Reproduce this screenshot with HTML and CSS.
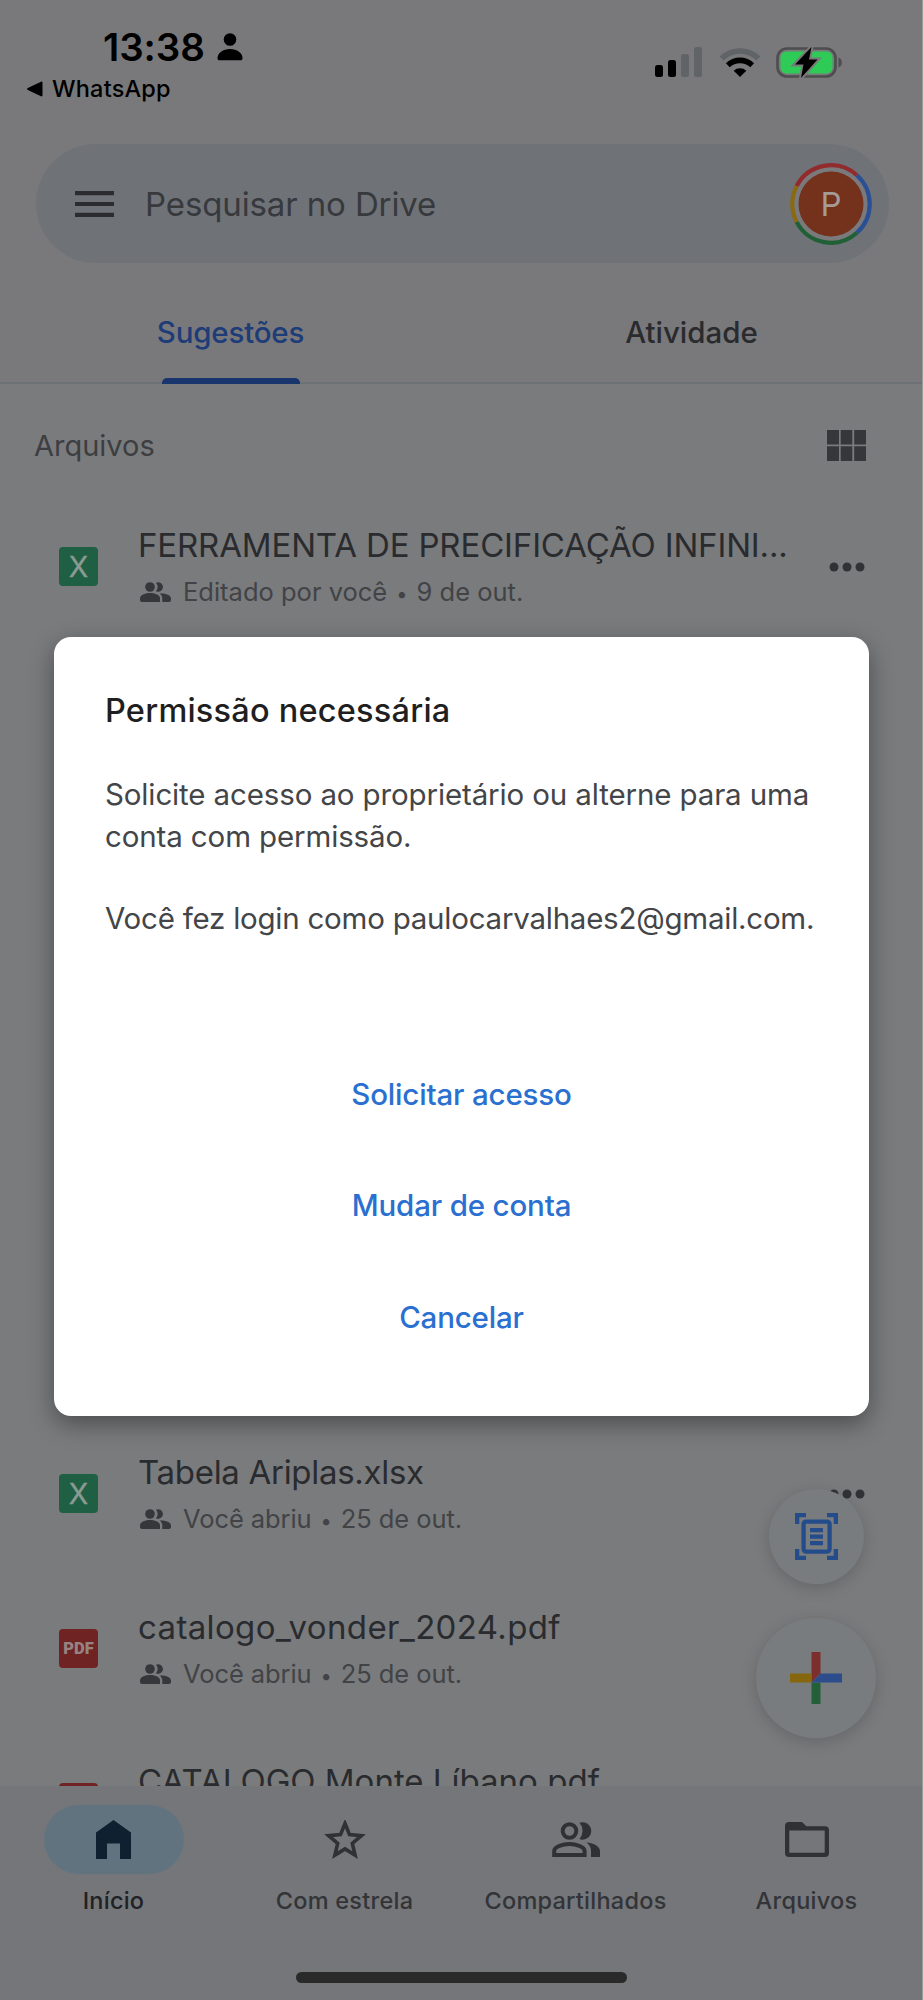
FILE: index.html
```html
<!DOCTYPE html>
<html lang="pt-BR">
<head>
<meta charset="utf-8">
<title>Drive</title>
<link rel="stylesheet" href="styles.css">
</head>
<body>
<svg class="defs" width="0" height="0">
  <symbol id="people" viewBox="0 0 31 20">
    <circle cx="10" cy="5" r="4.800"/>
    <path d="M16 .7a4.800 4.800 0 1 1 0 8.600a7 7 0 0 0 0-8.600z"/>
    <path d="M0 18v-1.600C0 12.600 6 11 10 11s10 1.600 10 5.400V20H2a2 2 0 0 1-2-2z"/>
    <path d="M22.300 20v-3.400c0-2.200-1-3.900-2.600-5.100C24 11 31 12.500 31 16.600V18a2 2 0 0 1-2 2z"/>
  </symbol>
  <symbol id="dots" viewBox="0 0 36 10"><circle cx="5" cy="5" r="4.500"/><circle cx="18" cy="5" r="4.500"/><circle cx="31" cy="5" r="4.500"/></symbol>
</svg>
<div class="screen">
  <header class="status">
    <div class="status-left">
      <div class="clock-row">
        <span class="clock">13:38</span>
        <svg width="26" height="28" viewBox="0 0 26 28"><circle cx="13" cy="6.500" r="6.300"/><path d="M.5 25c0-5 5.500-9 12.500-9s12.500 4 12.500 9c0 1.500-.8 2.300-2 2.300h-21C1.300 27.300.5 26.500.5 25z"/></svg>
      </div>
      <div class="back-row">
        <svg width="16" height="16" viewBox="0 0 16 16"><path d="M.8 7L14 .7c1-.4 1.500 0 1.500 1v12.600c0 1-.5 1.400-1.500 1L.8 9c-1-.5-1-1.500 0-2z"/></svg>
        <span class="back">WhatsApp</span>
      </div>
    </div>
    <div class="status-right">
      <svg width="48" height="30" viewBox="0 0 48 30"><rect x="0" y="18" width="8" height="12" rx="2.500"/><rect x="13" y="13" width="8" height="17" rx="2.500"/><g fill="#606466"><rect x="26" y="7" width="8" height="23" rx="2.500"/><rect x="39" y="0" width="8" height="30" rx="2.500"/></g></svg>
      <svg class="wifi" width="42" height="31" viewBox="0 0 42 31"><g fill="none" stroke-width="5.600"><path d="M2.600 11.500a26.500 26.500 0 0 1 36.800 0" stroke="#606466"/><path d="M8.800 18.300a17.500 17.500 0 0 1 24.400 0" stroke="#000"/></g><path d="M21 30l-6.300-6.200a9.300 9.300 0 0 1 12.600 0z"/></svg>
      <svg width="67" height="33" viewBox="0 0 67 33"><rect x="1.500" y="1.500" width="58" height="28" rx="9.500" fill="none" stroke="#4d4d4f" stroke-width="2.600"/><path d="M62.500 10.500c2 .6 3.300 2.500 3.300 5s-1.300 4.400-3.300 5z" fill="#4d4d4f"/><rect x="4.500" y="4.500" width="52" height="22" rx="6" fill="#2fcb57"/><path d="M35.500 0L19 17.500h8.500L25 31 41.500 12.500H33z" stroke="#79797b" stroke-width="4"/><path d="M35.500 0L19 17.500h8.500L25 31 41.500 12.500H33z"/></svg>
    </div>
  </header>

  <div class="search">
    <svg class="menu" width="39" height="26" viewBox="0 0 39 26"><path d="M0 0h39v4.200H0zM0 10.900h39v4.200H0zM0 21.800h39V26H0z"/></svg>
    <span class="search-text">Pesquisar no Drive</span>
    <div class="avatar">
      <svg class="ring" width="82" height="82" viewBox="0 0 82 82"><circle cx="41" cy="41" r="38.800" fill="#7a7a7c"/><g fill="none" stroke-width="4.200"><path d="M6.600 23.100A38.800 38.800 0 0 1 66.900 12.200" stroke="#912b2e"/><path d="M66.900 12.200A38.800 38.800 0 0 1 66.900 69.800" stroke="#2b4f95"/><path d="M66.900 69.800A38.800 38.800 0 0 1 6.600 58.900" stroke="#215f36"/><path d="M6.600 58.900A38.800 38.800 0 0 1 6.600 23.100" stroke="#8b6912"/></g><circle cx="41" cy="41" r="32.500" fill="#74311b"/></svg>
      <span class="avatar-letter">P</span>
    </div>
  </div>

  <nav class="tabs">
    <div class="tab tab-on"><span>Sugestões</span><i class="tab-bar"></i></div>
    <div class="tab"><span>Atividade</span></div>
  </nav>

  <main class="content">
    <div class="section">
      <span class="section-title">Arquivos</span>
      <svg width="39" height="31" viewBox="0 0 39 31"><path d="M0 0h12v14.500H0zM13.700 0h11.600v14.500H13.700zM27.200 0H39v14.500H27.200zM0 16.300h12V31H0zM13.700 16.300h11.600V31H13.700zM27.200 16.300H39V31H27.200z"/></svg>
    </div>
    <div class="list">
      <div class="row row-1">
        <div class="file xls">X</div>
        <div class="info">
          <div class="name caps">FERRAMENTA DE PRECIFICAÇÃO INFINI...</div>
          <div class="meta"><svg width="31" height="20"><use href="#people"/></svg><span>Editado por você <b class="sep">•</b> 9 de out.</span></div>
        </div>
        <svg class="more" width="36" height="10"><use href="#dots"/></svg>
      </div>
      <div class="row row-7">
        <div class="file xls">X</div>
        <div class="info">
          <div class="name tight">Tabela Ariplas.xlsx</div>
          <div class="meta opened"><svg width="31" height="20"><use href="#people"/></svg><span>Você abriu <b class="sep">•</b> 25 de out.</span></div>
        </div>
        <svg class="more" width="36" height="10"><use href="#dots"/></svg>
      </div>
      <div class="row row-8">
        <div class="file pdf">PDF</div>
        <div class="info">
          <div class="name wide">catalogo_vonder_2024.pdf</div>
          <div class="meta opened"><svg width="31" height="20"><use href="#people"/></svg><span>Você abriu <b class="sep">•</b> 25 de out.</span></div>
        </div>
      </div>
      <div class="row row-9">
        <div class="file pdf"></div>
        <div class="info">
          <div class="name">CATALOGO Monte Líbano.pdf</div>
          <div class="meta"></div>
        </div>
      </div>
    </div>
  </main>

  <footer class="bottom">
    <div class="nav">
      <div class="nav-item nav-on">
        <div class="nav-icon"><svg width="35" height="39" viewBox="0 0 35 39"><path d="M17.500 0L35 12.500V39H24V23.500H11V39H0V12.500z"/></svg></div>
        <span>Início</span>
      </div>
      <div class="nav-item">
        <div class="nav-icon"><svg width="42" height="40" viewBox="0 0 42 40"><path fill="none" stroke="#2f3135" stroke-width="3.600" d="M21 3.500l4.500 11.100 11.900 1-9.100 7.800 2.800 11.700L21 28.900l-10.100 6.200 2.800-11.700-9.100-7.800 11.900-1z"/></svg></div>
        <span>Com estrela</span>
      </div>
      <div class="nav-item">
        <div class="nav-icon"><svg width="48" height="35" viewBox="0 0 48 35"><circle cx="17.500" cy="9" r="6.800" fill="none" stroke="#2f3135" stroke-width="4"/><path d="M27.500 .8a8.700 8.700 0 1 1 0 16.300a12.500 12.500 0 0 0 0-16.300z"/><path d="M2.200 33v-4c0-4.600 9-7 15.200-7s15.200 2.400 15.200 7v4z" fill="none" stroke="#2f3135" stroke-width="4"/><path d="M39 35v-6c0-3.500-1.500-6.300-4.500-8.500C41 21 48 24 48 29v6z"/></svg></div>
        <span>Compartilhados</span>
      </div>
      <div class="nav-item">
        <div class="nav-icon"><svg width="44" height="35" viewBox="0 0 44 35"><path fill-rule="evenodd" d="M4 0h13l4.400 4.300H40a4 4 0 0 1 4 4V31a4 4 0 0 1-4 4H4a4 4 0 0 1-4-4V4a4 4 0 0 1 4-4zM4.300 8.600v22.100h35.400V8.600z"/></svg></div>
        <span>Arquivos</span>
      </div>
    </div>
    <div class="home-bar"></div>
  </footer>

  <div class="fabs">
    <div class="fab fab-small"><svg width="43" height="47" viewBox="0 0 43 47"><path d="M0 0h11v4.300H4.300V11H0zM43 0H32v4.300h6.700V11H43zM0 47h11v-4.300H4.300V36H0zM43 47H32v-4.300h6.700V36H43zM15 15h13v4.200H15zM15 21.500h13v4.200H15zM15 28h13v4.200H15z"/><rect x="8.600" y="8.600" width="26" height="30" rx="2.500" fill="none" stroke="#244c8b" stroke-width="4.300"/></svg></div>
    <div class="fab fab-big"><svg width="52" height="52" viewBox="0 0 52 52"><path fill="#7c2f2c" d="M21.500 0h9v21.500l-9 9z"/><path fill="#86660f" d="M0 21.500h21.500v9H0z"/><path fill="#23603a" d="M21.500 30.500h9V52h-9z"/><path fill="#2d4c8c" d="M30.500 21.500H52v9H21.500z"/></svg></div>
  </div>

  <section class="dialog">
    <h1>Permissão necessária</h1>
    <p>Solicite acesso ao proprietário ou alterne para uma<br>conta com permissão.</p>
    <p class="account">Você fez login como paulocarvalhaes2@gmail.com.</p>
    <div class="actions">
      <button>Solicitar acesso</button>
      <button>Mudar de conta</button>
      <button>Cancelar</button>
    </div>
  </section>
</div>
</body>
</html>
```
FILE: styles.css
```css
* { box-sizing: border-box; }
body { margin: 0; background: #9a9a9c; font-family: Inter, "Liberation Sans", sans-serif; }
svg { display: block; flex: none; }
.defs { position: absolute; }
span { white-space: nowrap; }

.screen { position: relative; display: flex; flex-direction: column; width: 922px; height: 2000px; overflow: hidden; background: #79797b; }

.status { display: flex; justify-content: space-between; height: 144px; padding: 24px 79px 0 27px; color: #000; }
.status-left { display: flex; flex-direction: column; gap: 4px; }
.clock-row { display: flex; align-items: center; gap: 12px; padding-left: 76px; height: 46px; }
.clock { font-size: 38.5px; line-height: 46px; font-weight: 600; letter-spacing: -.1px; }
.back-row { display: flex; align-items: center; gap: 9px; height: 30px; }
.back { font-size: 23.5px; line-height: 30px; font-weight: 500; letter-spacing: .2px; }
.status-right { display: flex; align-items: flex-start; padding-top: 23px; }
.wifi { margin: 0 15px 0 16px; }

.search { display: flex; align-items: center; height: 119px; margin: 0 33px 0 36px; padding: 0 17px 0 39px; border-radius: 60px; background: #6f7378; }
.menu { fill: #2a2c30; }
.search-text { margin-left: 31px; font-size: 33px; line-height: 44px; letter-spacing: -.12px; color: #37393d; }
.avatar { display: grid; place-items: center; width: 82px; height: 82px; margin-left: auto; }
.avatar > * { grid-area: 1 / 1; }
.avatar-letter { font-size: 33px; line-height: 40px; color: #a49a96; }

.tabs { display: flex; height: 121px; border-bottom: 2px solid #6b7174; }
.tab { display: flex; flex: 1; flex-direction: column; align-items: center; justify-content: space-between; height: 121px; padding-top: 49px; font-size: 29.5px; line-height: 40px; font-weight: 500; color: #292b2e; }
.tab-on { color: #1d3c78; letter-spacing: -.2px; }
.tab-bar { width: 138px; height: 6px; border-radius: 5px 5px 0 0; background: #18366d; }

.content { flex: 1; min-height: 0; overflow: hidden; background: #7a7b7d; }
.section { display: flex; align-items: center; justify-content: space-between; height: 105.25px; padding: 17px 56px 0 34px; fill: #35373b; }
.section-title { padding-top: 1px; font-size: 29px; line-height: 38px; color: #3c3e41; }
.list { display: grid; grid-auto-rows: 154.55px; }
.row { display: flex; align-items: center; padding: 0 57px 0 59px; }
.row-1 { grid-row: 1; }
.row-7 { grid-row: 7; }
.row-8 { grid-row: 8; }
.row-9 { grid-row: 9; }
.file { display: grid; place-items: center; width: 39px; height: 39px; border-radius: 4px; color: #8b9a92; }
.xls { background: #1f5f43; font-size: 28.5px; line-height: 39px; font-weight: 400; -webkit-text-stroke: .4px; }
.pdf { background: #6f2322; font-family: Roboto, sans-serif; font-size: 16.5px; line-height: 39px; font-weight: 900; color: #978382; }
.info { margin-left: 40px; padding-bottom: 2px; }
.name { height: 44px; font-size: 33px; line-height: 44px; color: #292b2e; white-space: nowrap; }
.caps { letter-spacing: -.15px; }
.tight { letter-spacing: -.3px; }
.wide { letter-spacing: .35px; }
.meta { display: flex; align-items: center; gap: 12px; height: 32px; margin: 9px 0 0 2px; font-size: 25.5px; line-height: 32px; color: #414346; }
.opened { letter-spacing: -.08px; }
.meta svg { fill: #35373b; }
.sep { display: inline-block; width: 15px; font-size: 20px; line-height: 20px; font-weight: 400; text-align: center; vertical-align: 0; }
.more { margin-left: auto; fill: #303236; }

.bottom { display: flex; flex-direction: column; align-items: center; height: 214px; background: #757679; }
.nav { display: flex; width: 924px; margin-left: -2px; padding-top: 19px; }
.nav-item { display: flex; flex: 1; flex-direction: column; align-items: center; font-size: 23.5px; line-height: 32px; font-weight: 500; letter-spacing: .25px; color: #323438; fill: #2f3135; }
.nav-icon { display: flex; align-items: center; justify-content: center; width: 140px; height: 69px; margin-bottom: 11px; border-radius: 35px; }
.nav-on { color: #202225; fill: #0f2031; }
.nav-on .nav-icon { background: #627380; }
.home-bar { width: 331px; height: 11px; margin-top: 55px; border-radius: 6px; background: #2a2a2a; }

.fabs { position: absolute; right: 46px; top: 1489px; display: flex; flex-direction: column; align-items: center; gap: 34px; }
.fab { display: flex; align-items: center; justify-content: center; border-radius: 50%; background: #797c7e; box-shadow: 0 4px 16px rgba(0, 0, 0, .17); }
.fab-small { width: 95px; height: 95px; fill: #244c8b; }
.fab-big { width: 120px; height: 120px; }

.dialog { position: absolute; left: 54px; top: 637px; width: 815px; height: 779px; padding: 52px 40px 0 51px; border-radius: 17px; background: #fff; box-shadow: 0 8px 24px rgba(0, 0, 0, .38); }
.dialog h1 { margin: 0 0 40px; font-size: 32.5px; line-height: 44px; font-weight: 500; letter-spacing: .22px; color: #1f1f22; }
.dialog p { margin: 0 0 40px; font-size: 29.5px; line-height: 42px; letter-spacing: -.13px; white-space: nowrap; color: #434548; }
.dialog .account { letter-spacing: -.24px; }
.actions { display: flex; flex-direction: column; align-items: center; margin: 99px 0 0 -11px; }
.actions button { height: 111.6px; padding: 0; border: 0; background: none; font: 500 29.5px/40px Inter, sans-serif; letter-spacing: -.17px; color: #2a70d0; }
```
